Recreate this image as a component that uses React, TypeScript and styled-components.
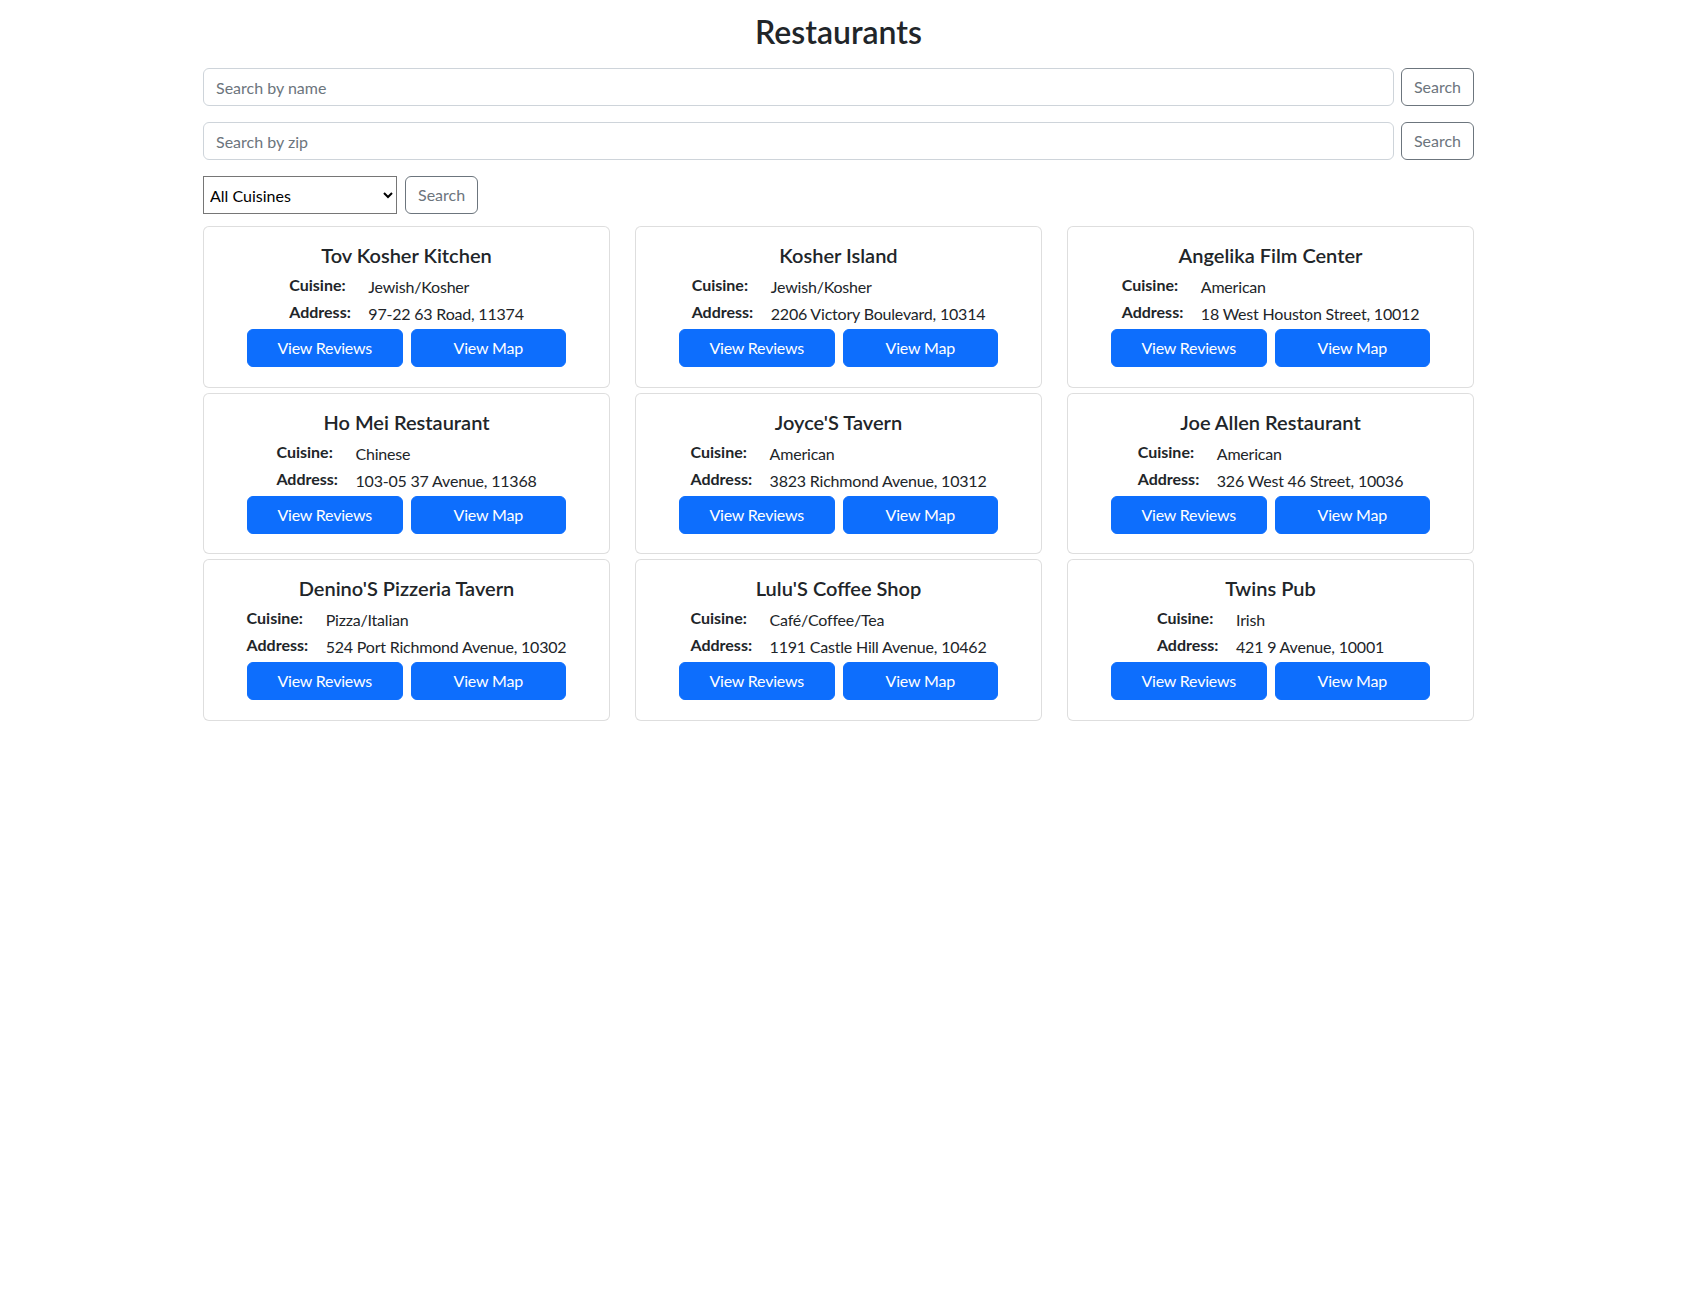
import React from "react";
import styled, { createGlobalStyle } from "styled-components";

const GlobalStyle = createGlobalStyle`
  *, *::before, *::after { box-sizing: border-box; }
  body {
    margin: 0;
    background: #fff;
    color: #212529;
    font-family: "Lato", "Noto Sans", sans-serif;
    font-size: 16px;
    line-height: 1.5;
  }
`;

const Page = styled.div`
  width: 1271px;
  margin-left: 203px;
  padding-top: 13px;
  padding-bottom: 40px;
`;

const Title = styled.h2`
  margin: 0 0 17px;
  font-size: 32px;
  font-weight: 600;
  line-height: 38.4px;
  text-align: center;
  color: #212529;
`;

const SearchRow = styled.div<{ $gap?: number }>`
  display: flex;
  align-items: center;
  gap: ${(p) => p.$gap ?? 7}px;
  margin-bottom: 16px;
`;

const TextInput = styled.input`
  flex: 1;
  height: 38px;
  padding: 6px 12px;
  font-family: inherit;
  font-size: 16px;
  line-height: 24px;
  color: #212529;
  background: #fff;
  border: 1px solid #ced4da;
  border-radius: 6px;
  outline: none;
  &::placeholder {
    color: #6c757d;
    opacity: 1;
  }
`;

const OutlineButton = styled.button`
  height: 38px;
  padding: 6px 12px;
  font-family: inherit;
  font-size: 16px;
  line-height: 24px;
  color: #6c757d;
  background: transparent;
  border: 1px solid #6c757d;
  border-radius: 6px;
  cursor: pointer;
`;

const CuisineSelect = styled.select`
  width: 194px;
  height: 38px;
  padding: 0 2px;
  font-family: inherit;
  font-size: 16px;
  color: #000;
  background: #fff;
  border: 1px solid #767676;
  border-radius: 0;
`;

const FilterRow = styled(SearchRow)`
  margin-bottom: 12px;
`;

const Grid = styled.div`
  display: grid;
  grid-template-columns: repeat(3, 1fr);
  column-gap: 25px;
  row-gap: 5px;
`;

const Card = styled.div`
  border: 1px solid rgba(0, 0, 0, 0.13);
  border-radius: 6px;
  padding: 16px;
  background: #fff;
  display: flex;
  flex-direction: column;
  align-items: center;
`;

const CardTitle = styled.h5`
  margin: 0 0 8px;
  font-size: 20px;
  font-weight: 600;
  line-height: 24px;
  text-align: center;
`;

const InfoTable = styled.div`
  display: grid;
  grid-template-columns: auto auto;
  column-gap: 17.5px;
  grid-auto-rows: 27px;
  justify-content: center;
`;

const Label = styled.div`
  font-weight: 700;
  line-height: 19.2px;
`;

const Value = styled.div`
  line-height: 24px;
  letter-spacing: -0.2px;
`;

const Actions = styled.div`
  display: flex;
  justify-content: center;
  gap: 8px;
  height: 41.5px;
`;

const PrimaryButton = styled.button`
  width: 155.5px;
  height: 38px;
  padding: 6px 12px;
  font-family: inherit;
  font-size: 16px;
  line-height: 24px;
  color: #fff;
  background: #0d6efd;
  border: 1px solid #0d6efd;
  border-radius: 6px;
  cursor: pointer;
  letter-spacing: -0.2px;
`;

type Restaurant = { name: string; cuisine: string; address: string };

const restaurants: Restaurant[] = [
  { name: "Tov Kosher Kitchen", cuisine: "Jewish/Kosher", address: "97-22 63 Road, 11374" },
  { name: "Kosher Island", cuisine: "Jewish/Kosher", address: "2206 Victory Boulevard, 10314" },
  { name: "Angelika Film Center", cuisine: "American", address: "18 West Houston Street, 10012" },
  { name: "Ho Mei Restaurant", cuisine: "Chinese", address: "103-05 37 Avenue, 11368" },
  { name: "Joyce'S Tavern", cuisine: "American", address: "3823 Richmond Avenue, 10312" },
  { name: "Joe Allen Restaurant", cuisine: "American", address: "326 West 46 Street, 10036" },
  { name: "Denino'S Pizzeria Tavern", cuisine: "Pizza/Italian", address: "524 Port Richmond Avenue, 10302" },
  { name: "Lulu'S Coffee Shop", cuisine: "Café/Coffee/Tea", address: "1191 Castle Hill Avenue, 10462" },
  { name: "Twins Pub", cuisine: "Irish", address: "421 9 Avenue, 10001" },
];

function RestaurantCard({ r }: { r: Restaurant }) {
  return (
    <Card>
      <CardTitle>{r.name}</CardTitle>
      <InfoTable>
        <Label>Cuisine:</Label>
        <Value>{r.cuisine}</Value>
        <Label>Address:</Label>
        <Value>{r.address}</Value>
      </InfoTable>
      <Actions>
        <PrimaryButton>View Reviews</PrimaryButton>
        <PrimaryButton>View Map</PrimaryButton>
      </Actions>
    </Card>
  );
}

export default function App() {
  return (
    <>
      <GlobalStyle />
      <Page>
        <Title>Restaurants</Title>
        <SearchRow>
          <TextInput placeholder="Search by name" />
          <OutlineButton>Search</OutlineButton>
        </SearchRow>
        <SearchRow>
          <TextInput placeholder="Search by zip" />
          <OutlineButton>Search</OutlineButton>
        </SearchRow>
        <FilterRow $gap={8}>
          <CuisineSelect defaultValue="All Cuisines">
            <option>All Cuisines</option>
            <option>American</option>
            <option>Chinese</option>
            <option>Irish</option>
            <option>Jewish/Kosher</option>
            <option>Pizza/Italian</option>
          </CuisineSelect>
          <OutlineButton>Search</OutlineButton>
        </FilterRow>
        <Grid>
          {restaurants.map((r) => (
            <RestaurantCard key={r.name} r={r} />
          ))}
        </Grid>
      </Page>
    </>
  );
}
